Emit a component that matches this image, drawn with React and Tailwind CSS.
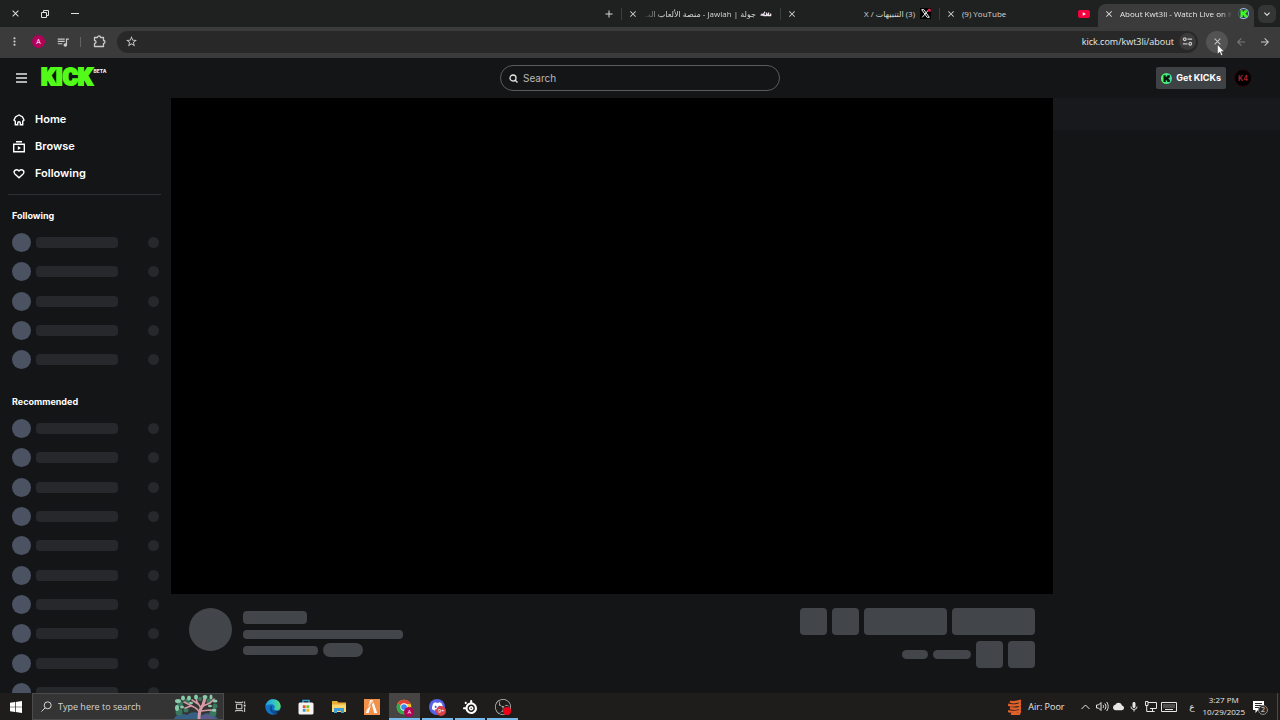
import { MdStarBorder, MdQueueMusic, MdMoreVert, MdKeyboardArrowDown, MdClose, MdAdd, MdArrowBack, MdArrowForward, MdCloud, MdMic } from 'react-icons/md';
import { SiSteelseries, SiObsstudio, SiFivem, SiDiscord } from 'react-icons/si';

const tabs = [
  { title: 'جولة | Jawlah - منصة الألعاب الت', icon: 'jawlah', rtl: true, faded: true },
  { title: '(3) التنبيهات / X', icon: 'x', rtl: true },
  { title: '(9) YouTube', icon: 'youtube' },
];

function KickMark({ className }) {
  return (
    <svg viewBox="0 0 24 24" className={className} aria-hidden="true">
      <path d="M4 3h6v5h2V6h2V3h7v6h-2v2h-2v2h2v2h2v6h-7v-3h-2v-2h-2v5H4z" fill="currentColor" />
    </svg>
  );
}

function TabIcon({ name }) {
  if (name === 'x') {
    return (
      <svg viewBox="0 0 20 20" className="size-[11px] shrink-0" aria-hidden="true">
        <rect width="20" height="20" fill="#000" />
        <path d="M3 3h4l10 14h-4zM16 3 4 17" fill="none" stroke="#eee" strokeWidth="1.8" />
        <circle cx="17" cy="4" r="3" fill="#d3204a" />
      </svg>
    );
  }
  if (name === 'youtube') {
    return (
      <svg viewBox="0 0 24 16" className="h-2 w-3 shrink-0" aria-hidden="true">
        <rect y="0" width="24" height="16" rx="4" fill="#f5003d" />
        <path d="m9.500 4.500 6.500 3.500-6.500 3.500z" fill="#fff" />
      </svg>
    );
  }
  return (
    <svg viewBox="0 0 24 12" className="h-1.5 w-3 shrink-0" aria-hidden="true">
      <path d="M1 8h5l2-3v4h5V5l3 4h5V5M17 3v5M8 2l2 1M4 5v3M20 7l3 1" fill="none" stroke="#f2e9f2" strokeWidth="2.500" />
    </svg>
  );
}

function Tab({ tab }) {
  return (
    <div className="flex h-3 w-[159px] items-center border-l border-[#3c3d3d] pr-2 pl-[6px]">
      <button aria-label="Close tab" className="shrink-0 text-[#d8d8d8]">
        <MdClose className="size-[10px]" />
      </button>
      <span
        dir={tab.rtl ? 'rtl' : 'ltr'}
        className={`ml-[6px] min-w-0 flex-1 whitespace-nowrap ${tab.faded ? 'mask-l-from-85%' : ''}`}
      >
        {tab.title}
      </span>
      <span className="ml-1 flex w-3 shrink-0 justify-center">
        <TabIcon name={tab.icon} />
      </span>
    </div>
  );
}

function TabStrip() {
  return (
    <div className="flex h-[27px] shrink-0 items-center bg-[#1f2020] text-[8px] leading-3 text-[#d6d6d6]">
      <div className="flex flex-1 items-center justify-between">
        <div className="flex items-center text-[#e2e2e2]">
          <button aria-label="Close" className="flex w-[30px] justify-center">
            <MdClose className="size-[11px]" />
          </button>
          <button aria-label="Restore" className="flex w-[30px] justify-center">
            <svg viewBox="0 0 8 8" className="size-2" fill="none" stroke="currentColor">
              <path d="M.5 2.500h5v5h-5zM2.500 2V.5h5v5H6" />
            </svg>
          </button>
          <button aria-label="Minimize" className="flex w-[30px] justify-center">
            <svg viewBox="0 0 8 8" className="size-2" stroke="currentColor">
              <path d="M0 3.500h8" />
            </svg>
          </button>
        </div>
        <button aria-label="New tab" className="mr-[6px] text-[#d8d8d8]">
          <MdAdd className="size-3" />
        </button>
      </div>
      {tabs.map((tab) => (
        <Tab key={tab.title} tab={tab} />
      ))}
      <div className="flex h-[23px] w-[156px] items-center self-end rounded-t-lg bg-[#3b3b3b] pr-[5px] pb-1 pl-[6px] text-[#e8e8e8]">
        <button aria-label="Close tab" className="shrink-0">
          <MdClose className="size-[10px]" />
        </button>
        <span className="ml-[6px] min-w-0 flex-1 whitespace-nowrap mask-r-from-90%">
          About Kwt3li - Watch Live on K
        </span>
        <span className="ml-[6px] flex size-[11px] shrink-0 items-center justify-center rounded-full border border-[#9cc3ea] border-l-[#4b5a68]">
          <KickMark className="size-[9px] text-[#3dfc28]" />
        </span>
      </div>
      <button aria-label="Search tabs" className="mr-1 ml-1 flex size-[18px] items-center justify-center rounded-md bg-[#343535] text-[#e8e8e8]">
        <MdKeyboardArrowDown className="size-3" />
      </button>
    </div>
  );
}

function Toolbar() {
  return (
    <div className="flex h-[31px] shrink-0 items-center bg-[#3b3b3b] pr-[9px] pb-[2px] pl-2 text-[#c9c9c9]">
      <button aria-label="Menu">
        <MdMoreVert className="size-[13px]" />
      </button>
      <button aria-label="Profile" className="ml-[11px] flex size-[13px] items-center justify-center rounded-full bg-[#b5005b] text-[7px] leading-none text-white">
        A
      </button>
      <button aria-label="Media" className="ml-[11px]">
        <MdQueueMusic className="size-[14px]" />
      </button>
      <span className="ml-[10px] h-[10px] w-px bg-[#636363]" />
      <button aria-label="Extensions" className="ml-3">
        <svg viewBox="0 0 13 13" className="size-[13px]" fill="none" stroke="currentColor" strokeWidth="1.300">
          <path d="M1.500 2.500h3c0-2 3-2 3 0h3v3c2 0 2 3 0 3v3h-9v-3c2 0 2-3 0-3z" strokeLinejoin="round" />
        </svg>
      </button>
      <div className="ml-[11px] flex h-[22px] flex-1 items-center rounded-full bg-[#282828] pr-[2px] pl-[8px]">
        <button aria-label="Bookmark this tab">
          <MdStarBorder className="size-[13px]" />
        </button>
        <input
          aria-label="Address"
          defaultValue="kick.com/kwt3li/about"
          className="min-w-0 flex-1 bg-transparent px-[5px] text-right text-[9px] leading-4 text-[#e8e8e8] outline-none"
        />
        <button aria-label="Site information" className="flex size-[17px] items-center justify-center rounded-full bg-[#3b3b3b]">
          <svg viewBox="0 0 12 12" className="size-[11px]" fill="none" stroke="currentColor" strokeWidth="1.300">
            <circle cx="3" cy="3.500" r="1.500" />
            <path d="M6 3.500h5M1 8.500h5" />
            <circle cx="9" cy="8.500" r="1.500" />
          </svg>
        </button>
      </div>
      <button aria-label="Stop loading" className="relative ml-2 flex size-[22px] items-center justify-center rounded-full bg-[#535353]">
        <MdClose className="size-[11px]" />
        <svg viewBox="0 0 8 12" className="absolute top-[13px] left-[11px] h-3 w-2" aria-hidden="true">
          <path d="M.5.5v9.500l2.200-2 1.500 3.500 1.500-.7-1.500-3.300H7z" fill="#fff" stroke="#222" strokeWidth=".4" />
        </svg>
      </button>
      <button aria-label="Forward" className="ml-[7px] text-[#7b7b7b]">
        <MdArrowBack className="size-3" />
      </button>
      <button aria-label="Back" className="ml-3">
        <MdArrowForward className="size-3" />
      </button>
    </div>
  );
}

function Header() {
  return (
    <header className="grid h-10 shrink-0 grid-cols-[1fr_280px_1fr] items-center bg-[#141517] font-[Inter,sans-serif]">
      <div className="flex items-center pl-4">
        <button aria-label="Toggle sidebar" className="text-[#e6e6e6]">
          <svg viewBox="0 0 11 10" className="h-[10px] w-[11px]" stroke="currentColor" strokeWidth="1.500">
            <path d="M0 1h11M0 5h11M0 9h11" />
          </svg>
        </button>
        <a href="#home" className="ml-[14px] flex items-start text-[#53fc18]">
          <span className="font-[Roboto,sans-serif] text-[23px] leading-5 font-black [-webkit-text-stroke:2px_#53fc18]">KICK</span>
          <span className="ml-px text-[5px] leading-[6px] font-bold text-white">BETA</span>
        </a>
      </div>
      <label className="flex h-[26px] items-center rounded-full border border-[#5a5b5d] px-2 text-[#e6e6e6]">
        <svg viewBox="0 0 9 9" className="size-[9px] shrink-0" fill="none" stroke="currentColor" strokeWidth="1.300">
          <circle cx="4" cy="4" r="3" />
          <path d="m6.200 6.200 2.300 2.300" />
        </svg>
        <input
          type="search"
          aria-label="Search"
          placeholder="Search"
          className="ml-[5px] min-w-0 flex-1 bg-transparent text-[10px] leading-4 outline-none placeholder:text-[#b9babb]"
        />
      </label>
      <div className="flex items-center justify-end pr-7">
        <button className="flex h-[22px] items-center gap-1 rounded-xs bg-[#3f4245] px-[5px] text-[9px] leading-4 font-bold text-white">
          <span className="flex size-[11px] items-center justify-center rounded-full bg-linear-to-r from-[#53fc58] to-[#3fd6a0]">
            <KickMark className="size-[9px] text-[#0b1a10]" />
          </span>
          Get KICKs
        </button>
        <button aria-label="Account" className="ml-2 flex size-[18px] items-center justify-center rounded-full border border-[#2b090d] bg-black text-[7px] leading-none font-bold text-[#b3202c]">
          K4
        </button>
      </div>
    </header>
  );
}

const links = [
  { label: 'Home', type: 'home' },
  { label: 'Browse', type: 'browse' },
  { label: 'Following', type: 'following' },
];

function NavIcon({ type }) {
  return (
    <svg viewBox="0 0 12 12" className="size-3" fill="none" stroke="currentColor" strokeWidth="1.400" aria-hidden="true">
      {type === 'home' && <path d="M2.300 10.800h2.400V9a1.300 1.300 0 0 1 2.600 0v1.800h2.400V7.300L11 6 9.500 3 6 1 2.500 3 1 6l1.300 1.300z" />}
      {type === 'browse' && (
        <>
          <path d="M3 .8h6M.7 3.200h10.600v7.600H.7z" />
          <path d="m4.800 5.100 3.200 1.900-3.200 1.900z" fill="currentColor" stroke="none" />
        </>
      )}
      {type === 'following' && <path d="M6 9.800 1.900 5.900C-.2 3.500 2.900-.1 6 2.900c3.100-3 6.200.6 4.100 3z" />}
    </svg>
  );
}

function SkeletonRow() {
  return (
    <li className="flex shrink-0 items-center">
      <span className="size-[19px] rounded-full bg-[#4b5262]" />
      <span className="ml-[5px] h-[11px] w-[82px] rounded-sm bg-[#26282b]" />
      <span className="ml-auto size-[11px] rounded-full bg-[#26282b]" />
    </li>
  );
}

function Sidebar() {
  return (
    <aside className="w-[171px] shrink-0 overflow-hidden pt-2 font-[Inter,sans-serif] text-white">
      <nav>
        {links.map((link) => (
          <a key={link.type} href={`#${link.type}`} className="flex h-[27px] items-center gap-[10px] pl-[13px] text-[11px] font-semibold">
            <NavIcon type={link.type} />
            {link.label}
          </a>
        ))}
      </nav>
      <hr className="mt-[7px] mr-[10px] ml-2 border-[#2d2f32]" />
      <div className="px-3">
        <h2 className="mt-[13px] text-[9px] leading-4 font-bold">Following</h2>
        <ul className="mt-[9px] flex h-[136px] flex-col justify-between">
          {Array.from({ length: 5 }, (_, i) => (
            <SkeletonRow key={i} />
          ))}
        </ul>
        <h2 className="mt-[25px] text-[9px] leading-4 font-bold">Recommended</h2>
        <ul className="mt-[9px] flex h-[283px] flex-col justify-between">
          {Array.from({ length: 10 }, (_, i) => (
            <SkeletonRow key={i} />
          ))}
        </ul>
      </div>
    </aside>
  );
}

function ChannelInfo() {
  return (
    <div className="flex justify-between px-[18px] pt-[14px]">
      <div className="flex gap-[11px]">
        <div className="size-[43px] rounded-full bg-[#424549]" />
        <div className="pt-[3px]">
          <div className="h-[13px] w-16 rounded-sm bg-[#424549]" />
          <div className="mt-[6px] h-[9px] w-40 rounded-sm bg-[#424549]" />
          <div className="mt-1 flex items-center gap-[5px]">
            <div className="h-[9px] w-[75px] rounded-sm bg-[#424549]" />
            <div className="h-[14px] w-10 rounded-full bg-[#424549]" />
          </div>
        </div>
      </div>
      <div className="flex flex-col items-end gap-[6px]">
        <div className="flex gap-[5px]">
          <div className="size-[27px] rounded-sm bg-[#424549]" />
          <div className="size-[27px] rounded-sm bg-[#424549]" />
          <div className="h-[27px] w-[83px] rounded-sm bg-[#424549]" />
          <div className="h-[27px] w-[83px] rounded-sm bg-[#424549]" />
        </div>
        <div className="flex items-center gap-[5px]">
          <div className="h-[9px] w-[26px] rounded-full bg-[#424549]" />
          <div className="h-[9px] w-[38px] rounded-full bg-[#424549]" />
          <div className="size-[27px] rounded-sm bg-[#424549]" />
          <div className="size-[27px] rounded-sm bg-[#424549]" />
        </div>
      </div>
    </div>
  );
}

function Coral() {
  return (
    <svg viewBox="0 0 44 25" className="ml-auto h-full w-11" aria-hidden="true">
      <path d="M0 25c2-5 8-6 13-4 5-4 12-3 15 0 5-3 12-2 16 4z" fill="#356083" />
      <path d="M26 25c2-5 9-6 13-2l2 2z" fill="#5c5a8a" />
      <g fill="#37785f">
        <circle cx="6" cy="10" r="3" />
        <circle cx="13" cy="7" r="2.500" />
        <circle cx="26" cy="5" r="2" />
        <circle cx="35" cy="7" r="2.500" />
        <circle cx="5" cy="18" r="3.500" />
        <circle cx="12" cy="16" r="2.500" />
        <circle cx="39" cy="19" r="3.500" />
        <circle cx="41" cy="12" r="2.500" />
      </g>
      <g fill="none" stroke="#d69aa4" strokeLinecap="round">
        <path d="M25 24c0-6 1-9 4-13l2-7" strokeWidth="3" />
        <path d="M25 18c-2-5-6-5-9-7L10 8M27 14l-4-6-1-4M29 12l7-3 4-4M27 17l9-1 5 1M17 12l-6 2M24 10l-6-4" strokeWidth="1.600" />
      </g>
      <g fill="#8accaa">
        <ellipse cx="4" cy="7" rx="3" ry="2" />
        <ellipse cx="9" cy="4" rx="2" ry="2.500" />
        <ellipse cx="3" cy="14" rx="2" ry="3" />
        <ellipse cx="8" cy="13" rx="2" ry="1.500" />
        <ellipse cx="15" cy="4" rx="2" ry="2.500" />
        <ellipse cx="22" cy="3" rx="2" ry="2.500" />
        <ellipse cx="31" cy="3" rx="2.500" ry="2" />
        <ellipse cx="37" cy="3" rx="1.500" ry="2.500" />
        <ellipse cx="41" cy="7" rx="2.500" ry="1.500" />
        <ellipse cx="40" cy="16" rx="2.500" ry="1.500" />
        <ellipse cx="17" cy="9" rx="2" ry="1.200" />
        <ellipse cx="36" cy="12" rx="2" ry="1.200" />
      </g>
    </svg>
  );
}

function EdgeIcon() {
  return (
    <svg viewBox="0 0 24 24" className="size-4">
      <defs>
        <linearGradient id="edgeTop" x1="0" x2="1">
          <stop stopColor="#219be0" />
          <stop offset=".6" stopColor="#35c6c0" />
          <stop offset="1" stopColor="#61dc62" />
        </linearGradient>
      </defs>
      <circle cx="12" cy="12" r="11.500" fill="#1272c4" />
      <path d="M.7 11C1.500 4.500 6.500.5 12 .5c7 0 11.500 5 11.500 10.500 0 4-3 6-6 6-3.500 0-4.500-1.500-3.500-3 1.500-2.500-.5-6-4.500-6C5.500 8 2 9 .7 11z" fill="url(#edgeTop)" />
      <path d="M8 11c-2 5 1 11 7 12 3-.5 6-2.500 7-5-4 2-10 1-11.500-3C10 13.500 10 12 10.500 11c-.8-.6-1.800-.6-2.500 0z" fill="#0c4b91" />
      <path d="M13.500 17c3 2.500 6.500 2 9.500 0l2 3-4 3z" fill="#1f1e1d" />
    </svg>
  );
}

function StoreIcon() {
  return (
    <svg viewBox="0 0 16 16" className="size-4">
      <path d="M5 4V1.500h6V4" fill="none" stroke="#35a5d8" strokeWidth="1.500" />
      <rect x=".5" y="3.500" width="15" height="12" rx="1.500" fill="#f3f3f3" />
      <path d="M4.800 6.300h2.800v2.800H4.800z" fill="#e8502b" />
      <path d="M8.400 6.300h2.800v2.800H8.400z" fill="#7db928" />
      <path d="M4.800 9.900h2.800v2.800H4.800z" fill="#2a9fd8" />
      <path d="M8.400 9.900h2.800v2.800H8.400z" fill="#f6b61a" />
    </svg>
  );
}

function FolderIcon() {
  return (
    <svg viewBox="0 0 16 14" className="h-[14px] w-4">
      <path d="M1 1h5l1.500 1.500H15V12H1z" fill="#e8ad34" />
      <path d="M1 4.500h14V12H1z" fill="#fbd76e" />
      <path d="M3 13V8h10v5h-3v-2H6v2z" fill="#3f9fdb" />
    </svg>
  );
}

function ChromeIcon() {
  return (
    <span className="relative">
      <svg viewBox="0 0 24 24" className="size-4">
        <circle cx="12" cy="12" r="11" fill="#f7c51e" />
        <path d="M12 12 2.500 6.500A11 11 0 0 0 12 23l5-8z" fill="#2da94f" />
        <path d="M12 12 2.500 6.500a11 11 0 0 1 19-.1V7.500H12z" fill="#e24334" />
        <circle cx="12" cy="12" r="5.500" fill="#fff" />
        <circle cx="12" cy="12" r="4.300" fill="#4184f3" />
      </svg>
      <span className="absolute top-2 left-2 flex size-[10px] items-center justify-center rounded-full bg-[#b5005b] text-[6px] leading-none text-white">
        A
      </span>
    </span>
  );
}

const apps = [
  { name: 'Edge', icon: <EdgeIcon /> },
  { name: 'Store', icon: <StoreIcon /> },
  { name: 'File Explorer', icon: <FolderIcon /> },
  {
    name: 'FiveM',
    icon: (
      <span className="flex size-4 items-center justify-center bg-[#f2914a] text-white">
        <SiFivem className="size-[13px]" />
      </span>
    ),
  },
  { name: 'Chrome', icon: <ChromeIcon />, open: true, active: true },
  {
    name: 'Discord',
    open: true,
    icon: (
      <span className="relative flex size-4 items-center justify-center rounded-full bg-[#5662e8] text-white">
        <SiDiscord className="size-[11px]" />
        <span className="absolute top-[7px] left-[7px] flex size-[10px] items-center justify-center rounded-full bg-[#d8414a] text-[6px] leading-none">
          9+
        </span>
      </span>
    ),
  },
  { name: 'SteelSeries', icon: <SiSteelseries className="size-[14px] text-white" />, open: true },
  {
    name: 'OBS',
    open: true,
    icon: (
      <span className="relative text-[#c4c4c4]">
        <SiObsstudio className="size-4" />
        <span className="absolute top-2 left-2 size-2 rounded-full bg-[#f00018]" />
      </span>
    ),
  },
];

function Taskbar() {
  return (
    <footer className="flex h-[27px] shrink-0 items-center bg-[#1f1d1b] text-[#e6e6e6]">
      <button aria-label="Start" className="flex w-8 justify-center">
        <svg viewBox="0 0 12 12" className="size-3" fill="#fff">
          <path d="M0 1.700 5 1v4.700H0zM5.700.9 12 0v5.700H5.700zM0 6.300h5V11l-5-.7zM5.700 6.300H12V12l-6.300-.9z" />
        </svg>
      </button>
      <label className="flex h-full w-48 items-center border border-[#4b4b4b] bg-[#343434] pr-[5px] pl-2">
        <svg viewBox="0 0 12 12" className="size-[11px] shrink-0" fill="none" stroke="currentColor">
          <circle cx="7.300" cy="4.700" r="3.800" />
          <path d="M4.500 7.500.5 11.500" />
        </svg>
        <input
          aria-label="Type here to search"
          placeholder="Type here to search"
          className="ml-[6px] w-[100px] min-w-0 bg-transparent text-[9px] leading-4 outline-none placeholder:text-[#d4d4d4]"
        />
        <Coral />
      </label>
      <button aria-label="Task view" className="flex w-[33px] justify-center">
        <svg viewBox="0 0 12 12" className="size-[11px]" fill="none" stroke="currentColor">
          <path d="M1.500 3.500h6v5h-6zM.5 1.500V.5M.5 1.500h8V.5M.5 11.500v-1h8v1M10.500.5v2.500M10.500 7v5" />
          <path d="M9.500 4h2v2h-2z" fill="currentColor" stroke="none" />
        </svg>
      </button>
      <div className="grid h-full w-[262px] grid-cols-8">
        {apps.map((app) => (
          <button
            key={app.name}
            aria-label={app.name}
            className={`mx-px flex items-center justify-center border-b-2 pt-[2px] ${app.open ? 'border-[#76b9ed]' : 'border-transparent'} ${app.active ? 'bg-[#474543]' : ''}`}
          >
            {app.icon}
          </button>
        ))}
      </div>
      <div className="ml-auto flex h-full items-center text-[9px]">
        <button className="flex items-center gap-[6px]">
          <svg viewBox="0 0 14 16" className="h-4 w-[14px]" fill="none" stroke="#e2602a" strokeWidth="2.400">
            <path d="M2 2.500c3 1.500 6 1 11-1M0 5.700c4 1.500 8 1 13-.7M2 9c3 1 7 1 11-.5M0 12c4 1.500 8 1 13 0M3 14.800c3 .7 6 .7 9 0" />
            <path d="M11.800 1.500v13" strokeWidth="2" />
          </svg>
          Air: Poor
        </button>
        <button aria-label="Show hidden icons" className="ml-4">
          <svg viewBox="0 0 9 6" className="h-[6px] w-[9px]" fill="none" stroke="currentColor">
            <path d="m.5 5 4-4 4 4" />
          </svg>
        </button>
        <button aria-label="Volume" className="ml-[6px]">
          <svg viewBox="0 0 13 11" className="h-[11px] w-[13px]" fill="none" stroke="currentColor">
            <path d="M.5 4v3h2l2.500 2.500v-8L2.500 4zM7 4c.7 1 .7 2 0 3M8.800 2.500c1.500 2 1.500 4 0 6M10.700 1c2 3 2 6 0 9" />
          </svg>
        </button>
        <MdCloud className="ml-1 size-[11px]" />
        <MdMic className="ml-[4px] size-3" />
        <svg viewBox="0 0 12 11" className="ml-[5px] h-[11px] w-3" fill="none" stroke="currentColor">
          <path d="M3 1.500h8.500v6H5M.5.5h2.500v4H.5zM1.700 4.500v6M1.700 10.500h8M7.500 7.500v3" />
        </svg>
        <svg viewBox="0 0 16 10" className="ml-1 h-[10px] w-4" fill="none" stroke="currentColor">
          <path d="M.5.5h15v9H.5z" />
          <path d="M2.500 3h11M2.500 5h11" strokeDasharray="1 1" />
          <path d="M4 7.500h8" />
        </svg>
        <span className="ml-[11px] w-[9px] text-center">ع</span>
        <div className="ml-[6px] pb-[2px] text-center text-[8px] leading-3">
          <div>3:27 PM</div>
          <div>10/29/2025</div>
        </div>
        <button aria-label="Notifications" className="relative mr-3 ml-2">
          <svg viewBox="0 0 12 12" className="size-3">
            <path d="M0 0h11v9H5l-2.500 3V9H0z" fill="#fff" />
            <path d="M2 2.500h7M2 4.500h7M2 6.500h4" stroke="#2a2827" />
          </svg>
          <span className="absolute top-1 left-[5px] flex size-[10px] items-center justify-center rounded-full border border-[#8a8988] bg-[#2a2827] text-[7px] leading-none">
            2
          </span>
        </button>
        <span className="mr-[2px] h-full w-px bg-[#4c4a48]" />
      </div>
    </footer>
  );
}

export default function App() {
  return (
    <div className="flex h-screen flex-col overflow-hidden bg-[#141517] font-['Open_Sans','Noto_Sans','DejaVu_Sans',sans-serif]">
      <TabStrip />
      <Toolbar />
      <Header />
      <div className="flex min-h-0 flex-1">
        <Sidebar />
        <main className="min-w-0 flex-1">
          <div className="aspect-video bg-black" />
          <ChannelInfo />
        </main>
        <section aria-label="Chat" className="w-[227px] shrink-0">
          <div className="h-8 bg-[#17191c]" />
        </section>
      </div>
      <Taskbar />
    </div>
  );
}
